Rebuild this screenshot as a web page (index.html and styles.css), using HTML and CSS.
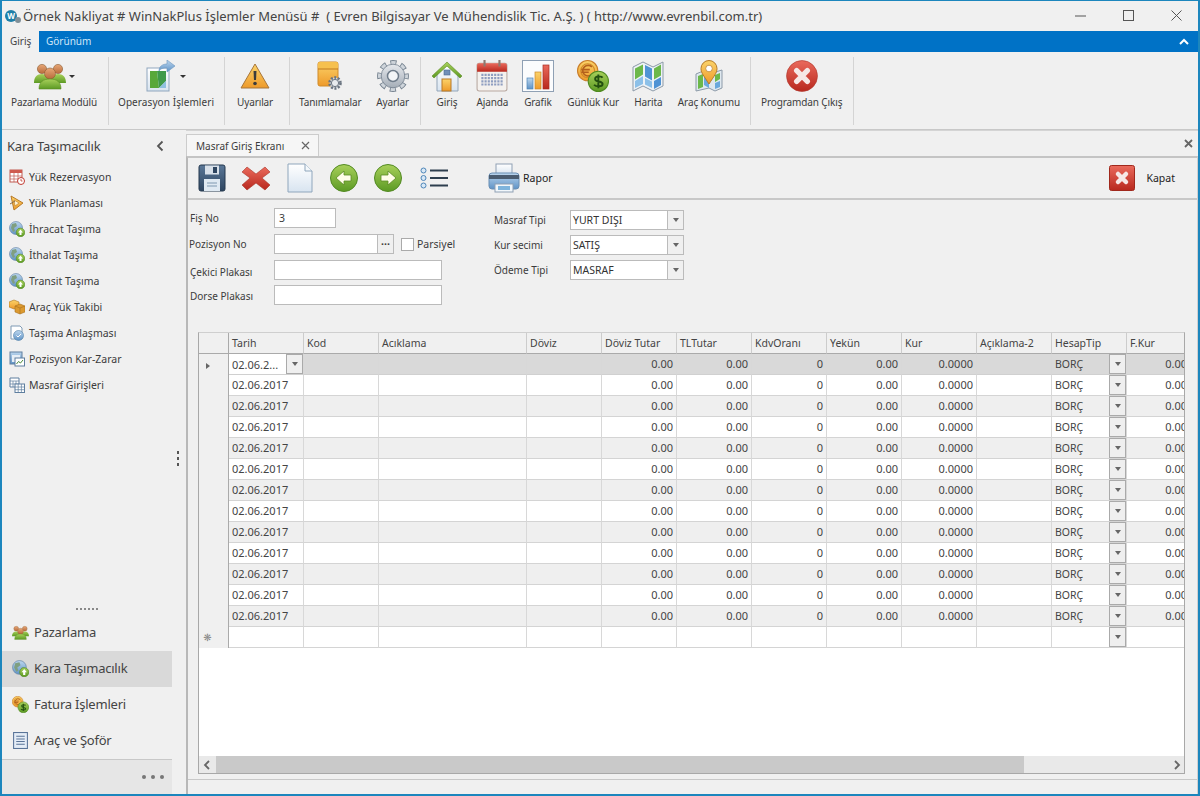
FILE: index.html
```html
<!DOCTYPE html>
<html lang="tr">
<head>
<meta charset="utf-8">
<title>Örnek Nakliyat</title>
<link rel="stylesheet" href="styles.css">
</head>
<body>
<svg class="defs" aria-hidden="true">
<defs>
<linearGradient id="gGreen" x1="0" y1="0" x2="0" y2="1"><stop offset="0" stop-color="#a8d05a"/><stop offset="1" stop-color="#5c9a24"/></linearGradient>
<linearGradient id="gRed" x1="0" y1="0" x2="0" y2="1"><stop offset="0" stop-color="#ea6a5c"/><stop offset="1" stop-color="#b8281e"/></linearGradient>
<linearGradient id="gOrange" x1="0" y1="0" x2="0" y2="1"><stop offset="0" stop-color="#fbd36a"/><stop offset="1" stop-color="#ee9a2a"/></linearGradient>
<linearGradient id="gBlue" x1="0" y1="0" x2="0" y2="1"><stop offset="0" stop-color="#bcd6ee"/><stop offset="1" stop-color="#5f93c6"/></linearGradient>
<linearGradient id="gNavy" x1="0" y1="0" x2="0" y2="1"><stop offset="0" stop-color="#5b7898"/><stop offset="1" stop-color="#2e4560"/></linearGradient>
<linearGradient id="gGray" x1="0" y1="0" x2="0" y2="1"><stop offset="0" stop-color="#e6e9ed"/><stop offset="1" stop-color="#a4adb7"/></linearGradient>
<linearGradient id="gPaper" x1="0" y1="0" x2="0" y2="1"><stop offset="0" stop-color="#ffffff"/><stop offset="1" stop-color="#d8e4f0"/></linearGradient>
<linearGradient id="gSkin" x1="0" y1="0" x2="0" y2="1"><stop offset="0" stop-color="#e8a878"/><stop offset="1" stop-color="#b86a3a"/></linearGradient>
</defs>
<symbol id="i-people" viewBox="0 0 32 28">
<circle cx="8" cy="7" r="4.6" fill="url(#gSkin)" stroke="#8a5a30" stroke-width=".6"/>
<circle cx="24" cy="7" r="4.6" fill="url(#gSkin)" stroke="#8a5a30" stroke-width=".6"/>
<path d="M0 21c0-6 3-9 8-9s8 3 8 9zM16 21c0-6 3-9 8-9s8 3 8 9z" fill="url(#gGreen)"/>
<circle cx="16" cy="11.500" r="5.500" fill="url(#gSkin)" stroke="#8a5a30" stroke-width=".6"/>
<path d="M5 27c0-7 4-10 11-10s11 3 11 10z" fill="url(#gGreen)" stroke="#5c8a24" stroke-width=".6"/>
</symbol>
<symbol id="i-oper" viewBox="0 0 30 32">
<rect x="1" y="8" width="22" height="23" fill="url(#gPaper)" stroke="#8fa6bd"/>
<path d="M4 11h7l2 17H4z" fill="#58a83a"/><path d="M11 11h9v10l-7 7z" fill="#3f9a4a"/><path d="M13 28l7-7v7z" fill="#8ec0e0"/>
<path d="M13 11c0-5 4-7 8-7V0l8 6-8 6V8c-3 0-6 0-8 3z" fill="url(#gBlue)" stroke="#6b95bd" stroke-width=".6"/>
</symbol>
<symbol id="i-warn" viewBox="0 0 30 26">
<path d="M15 1L29 25H1z" fill="url(#gOrange)" stroke="#a8763a" stroke-linejoin="round"/>
<path d="M13.500 8h3l-.5 9h-2z" fill="#3c3c3c"/><circle cx="15" cy="20.500" r="1.800" fill="#3c3c3c"/>
</symbol>
<symbol id="i-tanim" viewBox="0 0 26 30">
<rect x="1" y="1" width="20" height="24" rx="2" fill="url(#gOrange)" stroke="#d08a28"/>
<rect x="1" y="1" width="20" height="7" rx="2" fill="#f6c04e"/><path d="M1 8h20" stroke="#c07a20"/>
<circle cx="18" cy="22" r="5.500" fill="#d6dade" stroke="#6a7480" stroke-width="2.600" stroke-dasharray="2 1.500"/><circle cx="18" cy="22" r="3.600" fill="#e8ebee" stroke="#6a7480"/>
</symbol>
<symbol id="i-gear" viewBox="0 0 32 32">
<circle cx="16" cy="16" r="13.200" fill="none" stroke="#75828f" stroke-width="5.400" stroke-dasharray="6 4.370" stroke-dashoffset="3"/>
<circle cx="16" cy="16" r="13.200" fill="none" stroke="#cfd5db" stroke-width="3.600" stroke-dasharray="4.400 5.970" stroke-dashoffset="2.200"/>
<circle cx="16" cy="16" r="11.800" fill="url(#gGray)" stroke="#75828f" stroke-width=".8"/>
<circle cx="16" cy="16" r="5.500" fill="#f3f5f7" stroke="#6f7c8a" stroke-width="1.500"/>
</symbol>
<symbol id="i-home" viewBox="0 0 32 32">
<path d="M6 14v17h21V14L16 4z" fill="url(#gPaper)" stroke="#93a5b8"/>
<path d="M1 16L16 2l15 14-2 2L16 6 3 18z" fill="url(#gGreen)" stroke="#5c8a24" stroke-width=".6"/>
<rect x="13" y="10" width="6" height="5" fill="#6f8fb8" stroke="#4a6a90" stroke-width=".6"/>
<rect x="11" y="19" width="9" height="12" fill="url(#gOrange)" stroke="#b87a28"/>
</symbol>
<symbol id="i-cal" viewBox="0 0 30 30">
<rect x="1" y="3" width="28" height="26" rx="2" fill="#f4f1ee" stroke="#b8a8a0"/>
<path d="M1 5a2 2 0 012-2h24a2 2 0 012 2v6H1z" fill="url(#gRed)"/>
<path d="M8 0v6M22 0v6" stroke="#8c7a70" stroke-width="2"/>
<path d="M5 14h20M5 17h20M5 20h20M5 23h20" stroke="#8f9ec0" stroke-width="2" stroke-dasharray="2 1"/>
</symbol>
<symbol id="i-chart" viewBox="0 0 32 32">
<rect x=".5" y=".5" width="31" height="31" fill="#fbfcfd" stroke="#8fa0b4"/>
<rect x="5" y="18" width="6" height="11" fill="url(#gBlue)" stroke="#4f86b8" stroke-width=".7"/>
<rect x="13" y="12" width="6" height="17" fill="url(#gOrange)" stroke="#cc8828" stroke-width=".7"/>
<rect x="21" y="5" width="6" height="24" fill="url(#gRed)" stroke="#a82c20" stroke-width=".7"/>
</symbol>
<symbol id="i-coins" viewBox="0 0 30 30">
<circle cx="10" cy="10" r="9.500" fill="url(#gOrange)" stroke="#c87c28"/>
<circle cx="10" cy="10" r="6.500" fill="none" stroke="#d08a28"/>
<path d="M14 6.500a5 5 0 100 7M4 9h8M4 11.500h7" fill="none" stroke="#b4601c" stroke-width="1.500"/>
<circle cx="20" cy="20" r="9.500" fill="url(#gGreen)" stroke="#4f8a20"/>
<path d="M24 16.500c-1-1.500-7-2-7 1.200s7 1.800 7 4.800-6.500 2.500-8 .7M20 13.500v13" fill="none" stroke="#234f10" stroke-width="1.800"/>
</symbol>
<symbol id="i-map" viewBox="0 0 32 30">
<path d="M1 6l10-5 10 5 10-5v24l-10 5-10-5-10 5z" fill="#eef2f6" stroke="#8c9aa8"/>
<path d="M3 7.500l8-4v10l-8 5z" fill="#6cb84a"/><path d="M13 4l7 3.500v12l-7-4z" fill="#4f93d4"/><path d="M22 7.500l7-4v11l-7 4z" fill="#6cb84a"/>
<path d="M3 20l8-5v8l-8 4zM13 17l7 3.500V27l-7-3.500z" fill="#8cc0e8"/><path d="M22 20l7-4v8l-7 4z" fill="#4f93d4"/>
</symbol>
<symbol id="i-pin" viewBox="0 0 28 32">
<path d="M1 14l7-3 6 3 13-4v18l-7 3-6-3-13 3z" fill="#dfe8ef" stroke="#8c9aa8"/>
<path d="M3 16l5-2v13l-5 2zM20 15l5-2v6l-5 3z" fill="#6cb84a"/><path d="M9 14l5 3v11l-5-3zM20 23l5-2v6l-5 2z" fill="#6aa8dc"/>
<path d="M14 24C9 16 6 13 6 8.500a8 8 0 0116 0C22 13 19 16 14 24z" fill="url(#gOrange)" stroke="#b47a28"/>
<circle cx="14" cy="8.500" r="3.300" fill="#fff" stroke="#b47a28" stroke-width=".7"/>
</symbol>
<symbol id="i-exit" viewBox="0 0 30 30">
<circle cx="15" cy="15" r="14.500" fill="url(#gRed)" stroke="#b03a30" stroke-width=".6"/>
<path d="M10 10l10 10M20 10L10 20" stroke="#f6e8e6" stroke-width="5" stroke-linecap="round"/>
</symbol>
<symbol id="i-save" viewBox="0 0 28 28">
<path d="M1 3a2 2 0 012-2h22a2 2 0 012 2v22a2 2 0 01-2 2H3a2 2 0 01-2-2z" fill="url(#gNavy)" stroke="#24384e"/>
<rect x="7" y="1.500" width="14" height="9" fill="#d9e1ea"/><rect x="15" y="3" width="4" height="6" fill="#2e4560"/>
<rect x="6" y="15" width="16" height="12" fill="#dfe9f2"/><path d="M9 19h10M9 22h10" stroke="#7e98b0"/>
</symbol>
<symbol id="i-x" viewBox="0 0 28 28">
<path d="M5 3l9 7 9-7 5 5-8 6 8 7-5 5-9-7-9 7-5-5 8-7-8-6z" fill="url(#gRed)" stroke="#a83428" stroke-width=".6"/>
</symbol>
<symbol id="i-doc" viewBox="0 0 26 30">
<path d="M1 1h17l7 7v21H1z" fill="url(#gPaper)" stroke="#8fa6bc"/><path d="M18 1v7h7" fill="#f4f8fb" stroke="#8fa6bc"/>
</symbol>
<symbol id="i-left" viewBox="0 0 28 28">
<circle cx="14" cy="14" r="13.500" fill="url(#gGreen)" stroke="#538a24"/>
<path d="M6 14l8-7v4h7v6h-7v4z" fill="#fffde8" stroke="#5c8a24" stroke-width=".8"/>
</symbol>
<symbol id="i-right" viewBox="0 0 28 28">
<circle cx="14" cy="14" r="13.500" fill="url(#gGreen)" stroke="#538a24"/>
<path d="M22 14l-8-7v4H7v6h7v4z" fill="#fffde8" stroke="#5c8a24" stroke-width=".8"/>
</symbol>
<symbol id="i-list" viewBox="0 0 28 22">
<circle cx="3.500" cy="3.500" r="2.500" fill="#d8e8f6" stroke="#4f86b8"/><circle cx="3.500" cy="11" r="2.500" fill="#d8e8f6" stroke="#4f86b8"/><circle cx="3.500" cy="18.500" r="2.500" fill="#d8e8f6" stroke="#4f86b8"/>
<path d="M10 3.500h18M10 11h18M10 18.500h18" stroke="#2e3e4e" stroke-width="1.800"/>
</symbol>
<symbol id="i-print" viewBox="0 0 32 30">
<rect x="8" y="1" width="16" height="11" fill="url(#gPaper)" stroke="#8fa0b4"/>
<path d="M1 13a3 3 0 013-3h24a3 3 0 013 3v10a3 3 0 01-3 3H4a3 3 0 01-3-3z" fill="url(#gBlue)" stroke="#6a8fb4"/>
<rect x="1" y="12" width="30" height="4" fill="#4a5c70"/>
<rect x="7" y="21" width="18" height="8" fill="#f2f7fb" stroke="#8fa0b4"/><rect x="10" y="23" width="12" height="4" fill="#7fb4dc"/>
</symbol>
<symbol id="i-close" viewBox="0 0 26 26">
<rect x=".5" y=".5" width="25" height="25" rx="2" fill="url(#gRed)" stroke="#a0281c"/>
<path d="M9 9l8 8M17 9l-8 8" stroke="#f6e8e6" stroke-width="4.500" stroke-linecap="round"/>
</symbol>
<symbol id="i-rez" viewBox="0 0 16 16">
<rect x="1" y="1" width="12" height="12" fill="#fff" stroke="#c05a50"/><path d="M1 1h12v3H1z" fill="#cf5a4e"/><path d="M1 7h12M1 10h12M5 4v9M9 4v9" stroke="#c05a50" stroke-width=".7"/>
<circle cx="12" cy="12" r="3.500" fill="#fff" stroke="#c03a30"/><path d="M12 10v2h1.500" stroke="#c03a30" fill="none" stroke-width=".8"/>
</symbol>
<symbol id="i-plan" viewBox="0 0 16 16">
<path d="M2 1l12 7-9 7z" fill="url(#gOrange)" stroke="#b87a28"/><path d="M5 5l5 3-4 3z" fill="#fff4d8" stroke="#b87a28" stroke-width=".6"/><path d="M1 9l5-3" stroke="#8a6a40"/>
</symbol>
<symbol id="i-globe" viewBox="0 0 16 16">
<circle cx="7" cy="7" r="6.500" fill="url(#gBlue)" stroke="#5f7f9f" stroke-width=".6"/>
<path d="M3 3l4-1 1 3-3 2 1 3-2 1-2-4zM9 7l3 0-1 3-2-1z" fill="#7f9f80"/>
<circle cx="11.500" cy="11.500" r="4.300" fill="url(#gGreen)" stroke="#4f8a20" stroke-width=".6"/>
<path d="M11.500 8.500l2.500 3h-1.500v2.500h-2v-2.500H9z" fill="#fff"/>
</symbol>
<symbol id="i-box" viewBox="0 0 16 16">
<path d="M5 1l5 2v5l-5 2-5-2V3z" fill="url(#gOrange)" stroke="#a8701e" stroke-width=".6"/>
<path d="M11 5l5 2v6l-5 2-5-2V7z" fill="#dc9a30" stroke="#a8701e" stroke-width=".6"/><path d="M6 7l5 2 5-2M11 9v6" stroke="#a8701e" stroke-width=".6" fill="none"/>
</symbol>
<symbol id="i-anl" viewBox="0 0 16 16">
<path d="M2 1h9l2 2v11H2z" fill="#fff" stroke="#7f9ab4"/>
<circle cx="9.500" cy="10.500" r="5" fill="url(#gBlue)" stroke="#4f7fa8" stroke-width=".6"/><path d="M7.500 10.500l1.500 1.500 3-3" stroke="#fff" fill="none"/>
</symbol>
<symbol id="i-poz" viewBox="0 0 16 16">
<rect x="1" y="1" width="12" height="12" fill="url(#gBlue)" stroke="#5f7f9f"/><rect x="3" y="4" width="8" height="7" fill="#e6eef6"/>
<rect x="6" y="7" width="9.500" height="8" fill="#fff" stroke="#5f7f9f"/><path d="M7.500 13l2-2.500 2 1.500 2.500-3" stroke="#4a8a3a" fill="none"/>
</symbol>
<symbol id="i-tab" viewBox="0 0 16 16">
<path d="M1 1h9v9H1z" fill="#fff" stroke="#5f7f9f"/><path d="M1 4h9M4 4v6M7 4v6M1 7h9" stroke="#5f7f9f" stroke-width=".7"/>
<rect x="6" y="7" width="9.500" height="8.500" fill="#fff" stroke="#5f7f9f"/><path d="M6 10h9.500M6 12.700h9.500M9.200 7v8.500M12.400 7v8.500" stroke="#5f7f9f" stroke-width=".7"/>
</symbol>
<symbol id="i-arac" viewBox="0 0 16 16">
<rect x="1.500" y=".5" width="13" height="15" fill="#e4ecf6" stroke="#5a7498"/><path d="M4 4h8M4 6.500h8M4 9h8M4 11.500h8" stroke="#5a7498"/>
</symbol>
</svg>

<div class="app">
  <header class="titlebar">
    <span class="logo">W</span>
    <span class="apptitle">Örnek Nakliyat # WinNakPlus İşlemler Menüsü #  ( Evren Bilgisayar Ve Mühendislik Tic. A.Ş. ) ( http://www.evrenbil.com.tr)</span>
    <div class="winctl">
      <svg class="wc" viewBox="0 0 11 11"><path d="M0 6h11" stroke="#555"/></svg>
      <svg class="wc" viewBox="0 0 11 11"><rect x=".5" y=".5" width="10" height="10" fill="none" stroke="#555"/></svg>
      <svg class="wc" viewBox="0 0 11 11"><path d="M.5.5l10 10M10.500.5l-10 10" stroke="#555"/></svg>
    </div>
  </header>
  <nav class="tabstrip">
    <span class="rtab active">Giriş</span>
    <span class="rtab">Görünüm</span>
    <svg class="collapse" viewBox="0 0 10 7"><path d="M1 6l4-4 4 4" fill="none" stroke="#fff" stroke-width="2"/></svg>
  </nav>
  <section class="ribbon">
    <div class="group g1">
      <div class="ritem"><div class="ric"><svg class="rsvg people"><use href="#i-people"/></svg><i class="caret c1"></i></div><span>Pazarlama Modülü</span></div>
    </div>
    <div class="group g2">
      <div class="ritem"><div class="ric"><svg class="rsvg oper"><use href="#i-oper"/></svg><i class="caret c2"></i></div><span>Operasyon İşlemleri</span></div>
    </div>
    <div class="group g3">
      <div class="ritem"><div class="ric"><svg class="rsvg warn"><use href="#i-warn"/></svg></div><span>Uyarılar</span></div>
    </div>
    <div class="group g4">
      <div class="ritem"><div class="ric"><svg class="rsvg tanim"><use href="#i-tanim"/></svg></div><span>Tanımlamalar</span></div>
      <div class="ritem"><div class="ric"><svg class="rsvg"><use href="#i-gear"/></svg></div><span>Ayarlar</span></div>
    </div>
    <div class="group g5">
      <div class="ritem"><div class="ric"><svg class="rsvg"><use href="#i-home"/></svg></div><span>Giriş</span></div>
      <div class="ritem"><div class="ric"><svg class="rsvg"><use href="#i-cal"/></svg></div><span>Ajanda</span></div>
      <div class="ritem"><div class="ric"><svg class="rsvg"><use href="#i-chart"/></svg></div><span>Grafik</span></div>
      <div class="ritem"><div class="ric"><svg class="rsvg"><use href="#i-coins"/></svg></div><span>Günlük Kur</span></div>
      <div class="ritem"><div class="ric"><svg class="rsvg"><use href="#i-map"/></svg></div><span>Harita</span></div>
      <div class="ritem"><div class="ric"><svg class="rsvg"><use href="#i-pin"/></svg></div><span>Araç Konumu</span></div>
    </div>
    <div class="group g6">
      <div class="ritem"><div class="ric"><svg class="rsvg"><use href="#i-exit"/></svg></div><span>Programdan Çıkış</span></div>
    </div>
  </section>
  <div class="body">
    <aside class="sidebar">
      <div class="sidehead"><span>Kara Taşımacılık</span><svg class="chev" viewBox="0 0 8 12"><path d="M6.500 1.500L2 6l4.500 4.500" fill="none" stroke="#555" stroke-width="1.800"/></svg></div>
      <ul class="sidelist">
        <li><svg class="sic"><use href="#i-rez"/></svg>Yük Rezervasyon</li>
        <li><svg class="sic"><use href="#i-plan"/></svg>Yük Planlaması</li>
        <li><svg class="sic"><use href="#i-globe"/></svg>İhracat Taşıma</li>
        <li><svg class="sic"><use href="#i-globe"/></svg>İthalat Taşıma</li>
        <li><svg class="sic"><use href="#i-globe"/></svg>Transit Taşıma</li>
        <li><svg class="sic"><use href="#i-box"/></svg>Araç Yük Takibi</li>
        <li><svg class="sic"><use href="#i-anl"/></svg>Taşıma Anlaşması</li>
        <li><svg class="sic"><use href="#i-poz"/></svg>Pozisyon Kar-Zarar</li>
        <li><svg class="sic"><use href="#i-tab"/></svg>Masraf Girişleri</li>
      </ul>
      <div class="grip"><i></i><i></i><i></i><i></i><i></i><i></i></div>
      <ul class="navlist">
        <li><svg class="nic"><use href="#i-people"/></svg>Pazarlama</li>
        <li class="sel"><svg class="nic"><use href="#i-globe"/></svg>Kara Taşımacılık</li>
        <li><svg class="nic"><use href="#i-coins"/></svg>Fatura İşlemleri</li>
        <li><svg class="nic"><use href="#i-arac"/></svg>Araç ve Şoför</li>
      </ul>
      <div class="sidefoot"><i></i><i></i><i></i></div>
    </aside>
    <div class="split"><i></i><i></i><i></i></div>
    <main class="main">
      <div class="doctabs">
        <div class="doctab"><span>Masraf Giriş Ekranı</span><svg class="tabx" viewBox="0 0 9 9"><path d="M1 1l7 7M8 1L1 8" stroke="#666" stroke-width="1.200"/></svg></div>
        <svg class="allx" viewBox="0 0 9 9"><path d="M1 1l7 7M8 1L1 8" stroke="#666" stroke-width="1.800"/></svg>
      </div>
      <div class="panel">
        <div class="toolbar">
          <svg class="tbi"><use href="#i-save"/></svg>
          <svg class="tbi"><use href="#i-x"/></svg>
          <svg class="tbi doc"><use href="#i-doc"/></svg>
          <svg class="tbi"><use href="#i-left"/></svg>
          <svg class="tbi"><use href="#i-right"/></svg>
          <svg class="tbi list"><use href="#i-list"/></svg>
          <div class="tbbtn rapor"><svg class="tbp"><use href="#i-print"/></svg><span>Rapor</span></div>
          <div class="tbbtn kapat"><svg class="tbk"><use href="#i-close"/></svg><span>Kapat</span></div>
        </div>
        <form class="form">
          <div class="fcol left">
            <label class="lab">Fiş No</label><div class="inp short">3</div>
            <label class="lab back">Pozisyon No</label>
            <div class="pozrow"><div class="inp poz"></div><div class="dots">···</div><div class="chk"></div><span class="parsiyel">Parsiyel</span></div>
            <label class="lab low">Çekici Plakası</label><div class="inp long"></div>
            <label class="lab">Dorse Plakası</label><div class="inp long up"></div>
          </div>
          <div class="fcol right">
            <label class="lab">Masraf Tipi</label><div class="combo"><span>YURT DIŞI</span><b><i class="arrow"></i></b></div>
            <label class="lab">Kur secimi</label><div class="combo"><span>SATIŞ</span><b><i class="arrow"></i></b></div>
            <label class="lab">Ödeme Tipi</label><div class="combo"><span>MASRAF</span><b><i class="arrow"></i></b></div>
          </div>
        </form>
        <div class="gridbox">
          <div class="gridwrap">
            <table class="grid">
              <colgroup><col class="c0"><col class="cn"><col class="cn"><col class="cw"><col class="cn"><col class="cn"><col class="cn"><col class="cn"><col class="cn"><col class="cn"><col class="cn"><col class="cn"><col class="cl"></colgroup>
              <thead><tr><th></th><th>Tarih</th><th>Kod</th><th>Acıklama</th><th>Döviz</th><th>Döviz Tutar</th><th>TLTutar</th><th>KdvOranı</th><th>Yekün</th><th>Kur</th><th>Açıklama-2</th><th>HesapTip</th><th>F.Kur</th></tr></thead>
              <tbody>
                <tr class="cur"><td class="rh"><i class="tri"></i></td><td class="ed first"><div class="cmb"><span>02.06.2...</span><b><i class="arrow"></i></b></div></td><td></td><td></td><td></td><td class="n">0.00</td><td class="n">0.00</td><td class="n">0</td><td class="n">0.00</td><td class="n">0.0000</td><td></td><td class="ed"><div class="cmb"><span>BORÇ</span><b><i class="arrow"></i></b></div></td><td class="n">0.00</td></tr>
                <tr><td class="rh"></td><td>02.06.2017</td><td></td><td></td><td></td><td class="n">0.00</td><td class="n">0.00</td><td class="n">0</td><td class="n">0.00</td><td class="n">0.0000</td><td></td><td class="ed"><div class="cmb"><span>BORÇ</span><b><i class="arrow"></i></b></div></td><td class="n">0.00</td></tr>
                <tr class="alt"><td class="rh"></td><td>02.06.2017</td><td></td><td></td><td></td><td class="n">0.00</td><td class="n">0.00</td><td class="n">0</td><td class="n">0.00</td><td class="n">0.0000</td><td></td><td class="ed"><div class="cmb"><span>BORÇ</span><b><i class="arrow"></i></b></div></td><td class="n">0.00</td></tr>
                <tr><td class="rh"></td><td>02.06.2017</td><td></td><td></td><td></td><td class="n">0.00</td><td class="n">0.00</td><td class="n">0</td><td class="n">0.00</td><td class="n">0.0000</td><td></td><td class="ed"><div class="cmb"><span>BORÇ</span><b><i class="arrow"></i></b></div></td><td class="n">0.00</td></tr>
                <tr class="alt"><td class="rh"></td><td>02.06.2017</td><td></td><td></td><td></td><td class="n">0.00</td><td class="n">0.00</td><td class="n">0</td><td class="n">0.00</td><td class="n">0.0000</td><td></td><td class="ed"><div class="cmb"><span>BORÇ</span><b><i class="arrow"></i></b></div></td><td class="n">0.00</td></tr>
                <tr><td class="rh"></td><td>02.06.2017</td><td></td><td></td><td></td><td class="n">0.00</td><td class="n">0.00</td><td class="n">0</td><td class="n">0.00</td><td class="n">0.0000</td><td></td><td class="ed"><div class="cmb"><span>BORÇ</span><b><i class="arrow"></i></b></div></td><td class="n">0.00</td></tr>
                <tr class="alt"><td class="rh"></td><td>02.06.2017</td><td></td><td></td><td></td><td class="n">0.00</td><td class="n">0.00</td><td class="n">0</td><td class="n">0.00</td><td class="n">0.0000</td><td></td><td class="ed"><div class="cmb"><span>BORÇ</span><b><i class="arrow"></i></b></div></td><td class="n">0.00</td></tr>
                <tr><td class="rh"></td><td>02.06.2017</td><td></td><td></td><td></td><td class="n">0.00</td><td class="n">0.00</td><td class="n">0</td><td class="n">0.00</td><td class="n">0.0000</td><td></td><td class="ed"><div class="cmb"><span>BORÇ</span><b><i class="arrow"></i></b></div></td><td class="n">0.00</td></tr>
                <tr class="alt"><td class="rh"></td><td>02.06.2017</td><td></td><td></td><td></td><td class="n">0.00</td><td class="n">0.00</td><td class="n">0</td><td class="n">0.00</td><td class="n">0.0000</td><td></td><td class="ed"><div class="cmb"><span>BORÇ</span><b><i class="arrow"></i></b></div></td><td class="n">0.00</td></tr>
                <tr><td class="rh"></td><td>02.06.2017</td><td></td><td></td><td></td><td class="n">0.00</td><td class="n">0.00</td><td class="n">0</td><td class="n">0.00</td><td class="n">0.0000</td><td></td><td class="ed"><div class="cmb"><span>BORÇ</span><b><i class="arrow"></i></b></div></td><td class="n">0.00</td></tr>
                <tr class="alt"><td class="rh"></td><td>02.06.2017</td><td></td><td></td><td></td><td class="n">0.00</td><td class="n">0.00</td><td class="n">0</td><td class="n">0.00</td><td class="n">0.0000</td><td></td><td class="ed"><div class="cmb"><span>BORÇ</span><b><i class="arrow"></i></b></div></td><td class="n">0.00</td></tr>
                <tr><td class="rh"></td><td>02.06.2017</td><td></td><td></td><td></td><td class="n">0.00</td><td class="n">0.00</td><td class="n">0</td><td class="n">0.00</td><td class="n">0.0000</td><td></td><td class="ed"><div class="cmb"><span>BORÇ</span><b><i class="arrow"></i></b></div></td><td class="n">0.00</td></tr>
                <tr class="alt"><td class="rh"></td><td>02.06.2017</td><td></td><td></td><td></td><td class="n">0.00</td><td class="n">0.00</td><td class="n">0</td><td class="n">0.00</td><td class="n">0.0000</td><td></td><td class="ed"><div class="cmb"><span>BORÇ</span><b><i class="arrow"></i></b></div></td><td class="n">0.00</td></tr>
                <tr><td class="rh star">❋</td><td></td><td></td><td></td><td></td><td></td><td></td><td></td><td></td><td></td><td></td><td class="ed"><div class="cmb"><span></span><b><i class="arrow"></i></b></div></td><td></td></tr>
              </tbody>
            </table>
          </div>
          <div class="hscroll">
            <svg class="sarrow" viewBox="0 0 8 10"><path d="M6 1L2 5l4 4" fill="none" stroke="#666" stroke-width="1.800"/></svg>
            <div class="thumb"></div>
            <svg class="sarrow end" viewBox="0 0 8 10"><path d="M2 1l4 4-4 4" fill="none" stroke="#666" stroke-width="1.800"/></svg>
          </div>
        </div>
        <div class="statusline"></div>
      </div>
    </main>
  </div>
</div>
</body>
</html>
```
FILE: styles.css
```css
* { box-sizing: border-box; }
html, body { margin: 0; padding: 0; }
body { width: 1200px; height: 796px; overflow: hidden; font-family: "Noto Sans", sans-serif; font-size: 10.5px; color: #3c3c3c; background: #f0f0f0; }
.defs { display: block; width: 0; height: 0; overflow: hidden; }
.app { width: 1200px; height: 796px; display: flex; flex-direction: column; border: 1px solid #1c86bd; border-width: 1px 2px 2px 2px; background: #f0f0f0; }

.titlebar { height: 30px; flex: none; display: flex; align-items: center; padding: 0 0 0 3px; }
.logo { position: relative; width: 12px; height: 12px; border-radius: 50%; background: #1f7fa8; color: #fff; font-size: 8px; font-weight: 700; line-height: 12px; text-align: center; flex: none; margin-right: 6px; }
.logo::after { content: ""; position: absolute; left: 10px; top: 7px; width: 6px; height: 6px; border-radius: 50%; background: #7f8f98; }
.apptitle { font-size: 13px; color: #444; white-space: pre; }
.winctl { margin-left: auto; display: flex; gap: 37px; padding: 0 16px 2px 0; }
.wc { width: 11px; height: 11px; }

.tabstrip { height: 21px; flex: none; background: #0072c6; display: flex; align-items: center; }
.rtab { color: #cfe6f8; padding: 0 7px; height: 21px; line-height: 21px; font-size: 10px; }
.rtab.active { background: #f0f0f0; color: #444; width: 37px; padding-left: 8px; }
.collapse { width: 10px; height: 7px; margin-left: auto; margin-right: 9px; }

.ribbon { height: 78px; flex: none; display: flex; border-bottom: 1px solid #c8c8c8; padding-top: 5px; font-size: 10px; letter-spacing: -.12px; }
.group { height: 68px; border-right: 1px solid #d4d4d4; display: flex; justify-content: space-between; padding: 3px 10px 0; flex: none; }
.g1 { width: 107px; padding-left: 9px; }
.g2 { width: 116px; padding-left: 9px; letter-spacing: .08px; }
.g3 { width: 65px; padding: 3px 14px 0 12px; }
.g4 { width: 131px; padding: 3px 11px 0 9px; }
.g5 { width: 330px; }
.g6 { width: 103px; }
.ritem { display: flex; flex-direction: column; align-items: center; white-space: nowrap; }
.ric { height: 32px; display: flex; align-items: center; margin-bottom: 3px; }
.ritem span { line-height: 14px; }
.rsvg { width: 32px; height: 32px; }
.people { height: 28px; }
.oper { width: 30px; }
.warn { width: 30px; height: 26px; }
.tanim { width: 26px; height: 30px; }
.caret { width: 0; height: 0; border: 3px solid transparent; border-top: 3px solid #333; border-bottom: 0; flex: none; }
.c1 { margin-left: 3px; }
.c2 { margin-left: 4px; }

.body { flex: 1; display: flex; min-height: 0; }
.sidebar { width: 170px; flex: none; display: flex; flex-direction: column; }
.sidehead { height: 34px; display: flex; align-items: center; justify-content: space-between; padding: 0 8px 2px 5px; font-size: 13px; letter-spacing: -.22px; color: #444; }
.chev { width: 8px; height: 12px; }
.sidelist { list-style: none; margin: 0; padding: 0; flex: 1; }
.sidelist li { height: 26px; display: flex; align-items: center; padding-left: 7px; white-space: nowrap; }
.sic { width: 16px; height: 16px; margin-right: 4px; flex: none; }
.grip { display: flex; justify-content: center; gap: 2px; height: 7px; }
.grip i { width: 2px; height: 2px; background: #888; }
.navlist { list-style: none; margin: 0; padding: 0; }
.navlist li { height: 36px; display: flex; align-items: center; padding: 0 0 2px 10px; font-size: 13px; letter-spacing: -.22px; color: #444; }
.navlist .sel { background: #d9d9d9; }
.nic { width: 17px; height: 17px; margin-right: 5px; flex: none; }
.sidefoot { height: 35px; background: #e6e6e6; border-top: 1px solid #c8c8c8; display: flex; align-items: center; justify-content: flex-end; gap: 5px; padding-right: 8px; }
.sidefoot i { width: 4px; height: 4px; border-radius: 50%; background: #777; }

.split { width: 14px; flex: none; display: flex; flex-direction: column; align-items: center; justify-content: center; gap: 3px; padding: 0 2px 7px 0; }
.split i { width: 2px; height: 3px; background: #555; }

.main { flex: 1; min-width: 0; display: flex; flex-direction: column; }
.doctabs { height: 26px; flex: none; display: flex; align-items: flex-end; justify-content: space-between; border-top: 1px solid #d4d4d4; }
.doctab { width: 133px; height: 22px; border: 1px solid #ccc; border-bottom: 0; background: #f6f6f6; display: flex; align-items: center; justify-content: space-between; padding: 0 8px 0 9px; white-space: nowrap; font-size: 10px; }
.tabx { width: 9px; height: 9px; }
.allx { width: 9px; height: 9px; align-self: center; margin-right: 5px; }
.panel { flex: 1; min-height: 0; display: flex; flex-direction: column; border-top: 2px solid #c4c4c4; border-left: 2px solid #b8b8b8; border-right: 1px solid #d0d0d0; }
.toolbar { height: 42px; flex: none; display: flex; align-items: center; gap: 16px; padding-left: 10px; border-bottom: 2px solid #c8c8c8; }
.tbi { width: 28px; height: 28px; }
.tbi.doc { width: 26px; height: 30px; margin: 0 1px; }
.tbi.list { width: 28px; height: 22px; margin-left: 2px; }
.tbbtn { display: flex; align-items: center; gap: 3px; color: #222; }
.rapor { margin-left: 24px; }
.tbp { width: 32px; height: 30px; }
.kapat { margin-left: auto; gap: 11px; padding-right: 22px; }
.tbk { width: 26px; height: 26px; }

.form { height: 132px; flex: none; display: flex; padding: 8px 0 0 2px; font-size: 10.5px; }
.fcol { display: grid; row-gap: 6px; align-items: center; align-content: start; }
.left { grid-template-columns: 84px auto; grid-template-rows: repeat(4, 20px); width: 304px; }
.right { grid-template-columns: 76px 114px; grid-template-rows: repeat(3, 20px); row-gap: 5px; padding-top: 2px; }
.lab { white-space: nowrap; font-size: 10px; }
.back { margin-left: -1px; }
.low { margin-top: 4px; }
.parsiyel { white-space: nowrap; }
.inp { height: 20px; background: #fff; border: 1px solid #bbb; padding: 0 4px; line-height: 18px; }
.short { width: 62px; }
.poz { width: 104px; }
.long { width: 168px; }
.long.up { margin-top: -2px; }
.pozrow { display: flex; align-items: center; height: 20px; }
.dots { width: 16px; height: 20px; border: 1px solid #bbb; border-left: 0; background: #f0f0f0; text-align: center; line-height: 18px; font-weight: 700; }
.chk { width: 13px; height: 13px; background: #fff; border: 1px solid #aaa; margin: 0 3px 0 7px; }
.combo { height: 20px; display: flex; background: #fff; border: 1px solid #bbb; }
.combo span { flex: 1; padding-left: 2px; line-height: 18px; color: #333; }
.combo b { width: 16px; border-left: 1px solid #bbb; background: #f0f0f0; display: flex; align-items: center; justify-content: center; }
.arrow { width: 0; height: 0; border: 3.5px solid transparent; border-top: 4px solid #666; border-bottom: 0; }

.gridbox { height: 442px; flex: none; margin: 0 12px 0 10px; display: flex; flex-direction: column; border: 1px solid #a8a8a8; border-top-color: #cfcfcf; background: #fff; }
.gridwrap { flex: 1; overflow: hidden; min-height: 0; }
.grid { table-layout: fixed; border-collapse: separate; border-spacing: 0; width: 992px; }
.c0 { width: 30px; }
.cn { width: 75px; }
.cw { width: 148px; }
.cl { width: 64px; }
.grid th { height: 21px; background: #f0f0f0; font-weight: 400; text-align: left; padding: 0 3px; border-right: 1px solid #ccc; border-bottom: 1px solid #aaa; color: #444; white-space: nowrap; }
.grid th:first-child { border-right: 1px solid #aaa; }
.grid td { height: 21px; padding: 0 3px 2px; border-right: 1px solid #d8d8d8; border-bottom: 1px solid #d4d4d4; color: #444; white-space: nowrap; overflow: hidden; font-size: 11px; }
.grid td.n { text-align: right; }
.grid td.rh { background: #f0f0f0; border-right: 1px solid #aaa; border-bottom: 0; text-align: center; padding: 0 12px 0 0; }
.alt td { background: #efefef; }
.cur td { background: #d9d9d9; border-bottom-color: #d0d0d0; }
.tri { display: inline-block; width: 0; height: 0; border: 3.5px solid transparent; border-left: 4px solid #666; border-right: 0; }
.grid td.star { color: #888; font-family: "DejaVu Sans", sans-serif; font-size: 10px; line-height: 21px; }
.grid td.ed { padding: 0; }
.cmb { display: flex; height: 20px; padding-left: 3px; align-items: center; font-size: 10.5px; }
.cmb span { flex: 1; overflow: hidden; }
.cmb b { width: 17px; height: 20px; flex: none; border: 1px solid #aaa; background: #efefef; display: flex; align-items: center; justify-content: center; }
.cur .first { background: #fff; }
.first .cmb { font-size: 11px; }

.hscroll { height: 17px; flex: none; display: flex; align-items: center; background: #e9e9e9; }
.sarrow { width: 8px; height: 10px; margin: 0 5px 0 4px; flex: none; }
.thumb { width: 808px; height: 17px; background: #c9c9c9; }
.sarrow.end { margin-left: auto; margin-right: 3px; }
.statusline { margin-top: 5px; flex: 1; border-top: 1px solid #c8c8c8; }
```
